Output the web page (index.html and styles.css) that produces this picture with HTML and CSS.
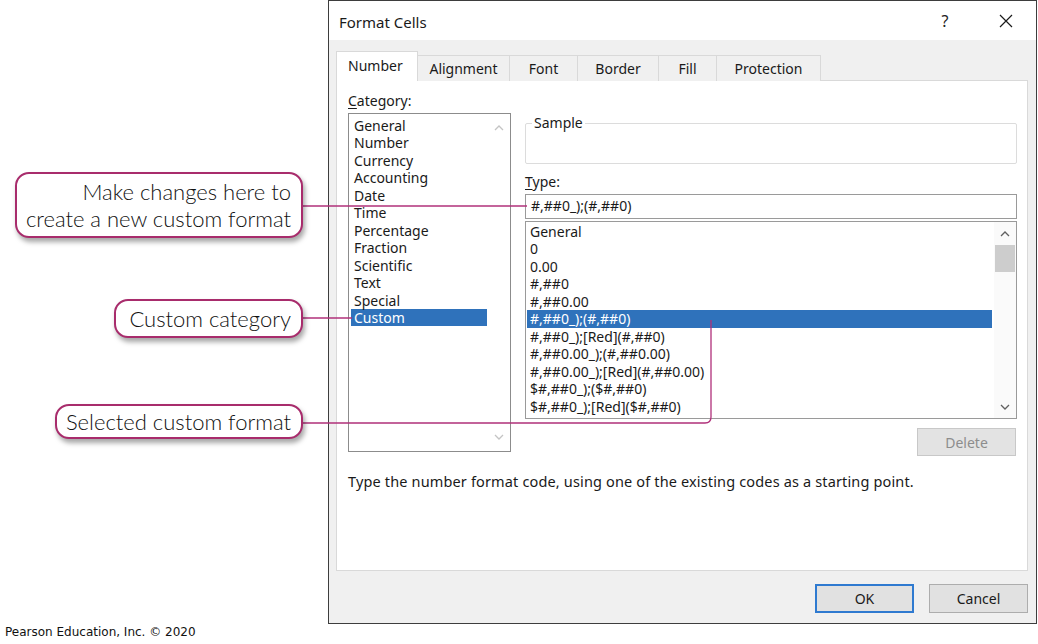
FILE: index.html
```html
<!DOCTYPE html>
<html lang="en">
<head>
<meta charset="utf-8">
<title>Format Cells</title>
<link rel="stylesheet" href="styles.css">
</head>
<body>
<div class="page">
  <section class="dialog">
    <header class="titlebar">
      <span class="title">Format Cells</span>
      <span class="tb-btn help">?</span>
      <span class="tb-btn close">
        <svg width="14" height="14" viewBox="0 0 14 14"><path d="M1 1 L13 13 M13 1 L1 13" stroke="#1a1a1a" stroke-width="1.2" fill="none"/></svg>
      </span>
    </header>
    <div class="body">
      <nav class="tabs">
        <span class="tab active">Number</span>
        <span class="tab w-align">Alignment</span>
        <span class="tab w-font">Font</span>
        <span class="tab w-border">Border</span>
        <span class="tab w-fill">Fill</span>
        <span class="tab w-prot">Protection</span>
      </nav>
      <div class="panel">
        <div class="cols">
          <div class="cat-col">
            <div class="label"><u>C</u>ategory:</div>
            <div class="listbox cat-list">
              <ul class="items">
                <li>General</li>
                <li>Number</li>
                <li>Currency</li>
                <li>Accounting</li>
                <li>Date</li>
                <li>Time</li>
                <li>Percentage</li>
                <li>Fraction</li>
                <li>Scientific</li>
                <li>Text</li>
                <li>Special</li>
                <li class="sel">Custom</li>
              </ul>
              <div class="scroll disabled">
                <span class="arrow up tall"><svg width="10" height="6" viewBox="0 0 10 6"><path d="M1 5 L5 1 L9 5" fill="none" stroke="currentColor" stroke-width="1.3"/></svg></span>
                <span class="track"></span>
                <span class="arrow down tall"><svg width="10" height="6" viewBox="0 0 10 6"><path d="M1 1 L5 5 L9 1" fill="none" stroke="currentColor" stroke-width="1.3"/></svg></span>
              </div>
            </div>
          </div>
          <div class="main-col">
            <fieldset class="sample">
              <legend>Sample</legend>
            </fieldset>
            <div class="label type-label"><u>T</u>ype:</div>
            <div class="textbox">#,##0_);(#,##0)</div>
            <div class="listbox fmt-list">
              <ul class="items">
                <li>General</li>
                <li>0</li>
                <li>0.00</li>
                <li>#,##0</li>
                <li>#,##0.00</li>
                <li class="sel">#,##0_);(#,##0)</li>
                <li>#,##0_);[Red](#,##0)</li>
                <li>#,##0.00_);(#,##0.00)</li>
                <li>#,##0.00_);[Red](#,##0.00)</li>
                <li>$#,##0_);($#,##0)</li>
                <li>$#,##0_);[Red]($#,##0)</li>
              </ul>
              <div class="scroll">
                <span class="arrow up"><svg width="10" height="6" viewBox="0 0 10 6"><path d="M1 5 L5 1 L9 5" fill="none" stroke="currentColor" stroke-width="1.3"/></svg></span>
                <span class="track"><span class="thumb"></span></span>
                <span class="arrow down"><svg width="10" height="6" viewBox="0 0 10 6"><path d="M1 1 L5 5 L9 1" fill="none" stroke="currentColor" stroke-width="1.3"/></svg></span>
              </div>
            </div>
            <div class="delete-row"><span class="btn disabled-btn">Delete</span></div>
          </div>
        </div>
        <p class="hint">Type the number format code, using one of the existing codes as a starting point.</p>
      </div>
      <footer class="footer">
        <span class="btn default">OK</span>
        <span class="btn">Cancel</span>
      </footer>
    </div>
  </section>
  <p class="credit">Pearson Education, Inc. © 2020</p>

  <svg class="leaders" width="1038" height="644" viewBox="0 0 1038 644">
    <path d="M303 206 H527" />
    <path d="M302 318 H352" />
    <path d="M302 423 H705 Q711 423 711 417 V320" />
  </svg>
  <div class="callout c1">Make changes here to<br>create a new custom format</div>
  <div class="callout c2">Custom category</div>
  <div class="callout c3">Selected custom format</div>
</div>
</body>
</html>
```

FILE: styles.css
```css
* { box-sizing: border-box; }
html, body { margin: 0; padding: 0; background: #fff; }
body { width: 1038px; height: 644px; overflow: hidden; }

.page {
  position: relative;
  width: 1038px;
  height: 644px;
  display: grid;
  grid-template-columns: 328px 710px;
  grid-template-rows: 625px 19px;
  font-family: "Noto Sans", "Open Sans", sans-serif;
  color: #1a1a1a;
}

.dialog {
  grid-column: 2;
  grid-row: 1;
  width: 709px;
  height: 624px;
  border: 1px solid #3d3d3d;
  display: flex;
  flex-direction: column;
  background: #f0f0f0;
}

.titlebar {
  height: 39px;
  background: #fff;
  display: flex;
  align-items: center;
  padding-left: 10px;
  padding-right: 7px;
}
.title { font-size: 15px; flex: 1; padding-top: 2px; }
.tb-btn {
  width: 46px;
  height: 30px;
  display: flex;
  align-items: center;
  justify-content: center;
}
.help { font-size: 16px; margin-right: 15px; color: #222; }

.body {
  flex: 1;
  display: flex;
  flex-direction: column;
  padding: 11px 8px 0 7px;
}

.tabs {
  display: flex;
  align-items: flex-end;
  height: 30px;
  position: relative;
  z-index: 1;
}
.tab {
  height: 26px;
  border: 1px solid #d9d9d9;
  border-bottom: none;
  border-left: none;
  background: #f0f0f0;
  font-size: 14px;
  display: flex;
  align-items: center;
  justify-content: center;
  padding-bottom: 1px;
}
.tab.active {
  height: 30px;
  width: 82px;
  background: #fff;
  border-left: 1px solid #d9d9d9;
  justify-content: flex-start;
  padding-left: 11px;
  padding-bottom: 2px;
}
.w-align { width: 92px; }
.w-font { width: 68px; }
.w-border { width: 81px; }
.w-fill { width: 58px; }
.w-prot { width: 104px; }

.panel {
  margin-top: -1px;
  height: 491px;
  background: #fff;
  border: 1px solid #d9d9d9;
  padding: 11px 10px 0 11px;
  display: flex;
  flex-direction: column;
}

.cols { display: flex; gap: 14px; }
.cat-col { width: 163px; display: flex; flex-direction: column; }
.main-col { width: 492px; display: flex; flex-direction: column; }

.label { font-size: 14px; line-height: 18px; height: 18px; }
.label u { text-decoration-thickness: 1px; text-underline-offset: 2px; }

.listbox {
  display: flex;
  border: 1px solid #9a9a9a;
  background: #fff;
}
.items {
  list-style: none;
  margin: 0;
  flex: 1;
  font-size: 14px;
  line-height: 17.45px;
}
.items li { padding-left: 3px; white-space: nowrap; }
.items li.sel { background: #2f72bb; color: #fff; }

.cat-list { margin-top: 3px; height: 339px; border-color: #8c8c8c; }
.cat-list .items { padding: 3px 1px 0 2px; }

.scroll {
  width: 22px;
  display: flex;
  flex-direction: column;
  background: #fafafa;
  color: #606060;
}
.scroll.disabled { color: #c4c4c4; background: #fff; }
.arrow {
  height: 23px;
  display: flex;
  align-items: center;
  justify-content: center;
}
.arrow.tall { height: 28px; }
.track { flex: 1; display: flex; flex-direction: column; align-items: center; }
.thumb { width: 20px; height: 27px; background: #cdcdcd; }

.sample {
  margin: 22px 0 0 0;
  height: 50px;
  border: 1px solid #dcdcdc;
  border-radius: 2px;
  padding: 0 6px;
}
.sample legend {
  font-size: 14px;
  line-height: 18px;
  padding: 0 2px;
}

.type-label { margin-top: 9px; }

.textbox {
  margin-top: 3px;
  height: 25px;
  border: 1px solid #9a9a9a;
  font-size: 14px;
  line-height: 22px;
  padding-left: 5px;
}

.fmt-list { margin-top: 2px; height: 198px; }
.fmt-list .items { padding: 1px 2px 0 1px; }

.delete-row { display: flex; justify-content: flex-end; margin-top: 9px; padding-right: 1px; }

.btn {
  width: 99px;
  height: 28px;
  border: 1px solid #adadad;
  background: #e1e1e1;
  font-size: 14px;
  display: flex;
  align-items: center;
  justify-content: center;
}
.disabled-btn { color: #8d8d8d; background: #e3e3e3; border-color: #c8c8c8; }

.hint {
  margin: 16px 0 0 0;
  font-size: 14.5px;
  letter-spacing: 0.15px;
  line-height: 18px;
}

.footer {
  display: flex;
  justify-content: flex-end;
  gap: 15px;
  padding-top: 13px;
}
.footer .btn { height: 29px; }
.btn.default { border: 2px solid #2f7ad0; }

.credit {
  grid-column: 1;
  grid-row: 2;
  margin: 0;
  padding-left: 5px;
  font-family: "DejaVu Sans", Verdana, sans-serif;
  font-size: 12px;
  line-height: 14px;
  color: #111;
}

.leaders {
  position: absolute;
  left: 0;
  top: 0;
  pointer-events: none;
}
.leaders path { fill: none; stroke: #b0307a; stroke-width: 1.3; }

.callout {
  position: absolute;
  right: 735px;
  background: #fff;
  border: 2px solid #a82c6c;
  border-radius: 14px;
  box-shadow: 2px 4px 5px rgba(0, 0, 0, 0.35);
  font-family: Lato, "Noto Sans", sans-serif;
  font-weight: 300;
  font-size: 22px;
  line-height: 27px;
  color: #111;
  text-align: right;
  white-space: nowrap;
  padding: 4px 10px 4px 9px;
}
.c1 { top: 172px; }
.c2 { top: 299px; padding-left: 13px; }
.c3 { top: 404px; padding-top: 2px; padding-bottom: 2px; }
```
